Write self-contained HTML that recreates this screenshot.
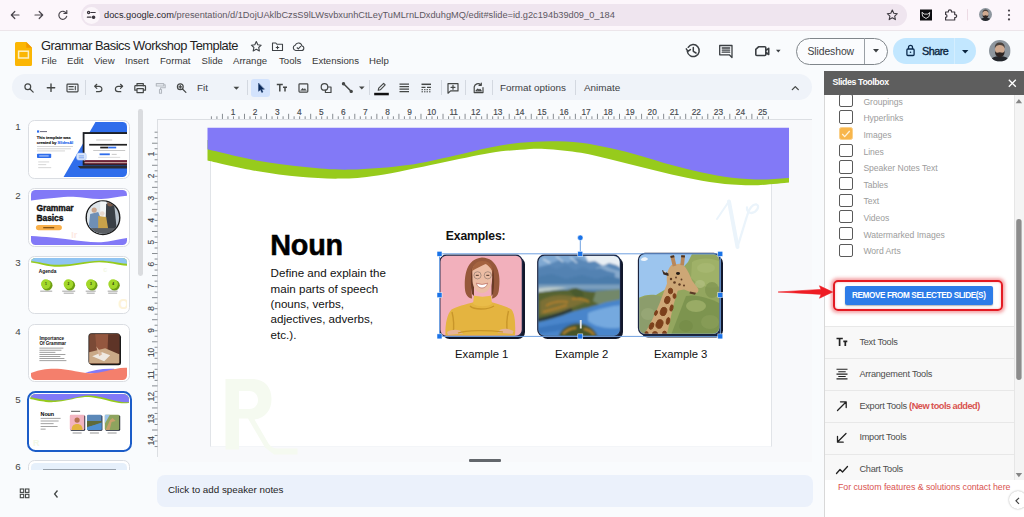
<!DOCTYPE html>
<html><head><meta charset="utf-8">
<style>
*{box-sizing:border-box;margin:0;padding:0}
html,body{width:1024px;height:517px;overflow:hidden;background:#f9fbfd;font-family:"Liberation Sans",sans-serif;color:#1f1f1f}
.abs,.t{position:absolute}
.t{white-space:nowrap;line-height:1}
svg{position:absolute;overflow:visible}
#chrome{left:0;top:0;width:1024px;height:31px;background:#fcf6fb;border-bottom:1px solid #ece5ea}
#url{left:81px;top:4px;width:826px;height:21.600px;border-radius:11px;background:#efe5ef}
#hdr{left:0;top:31px;width:1024px;height:42px;background:#f9fbfd}
.menu{top:56.4px;font-size:9.6px;color:#383838}
#tb{left:11.700px;top:74px;width:800.500px;height:26px;border-radius:13px;background:#eff3f9}
.tbt{top:83px;font-size:9.9px;color:#3c4043}
.sep{position:absolute;top:80px;width:1px;height:15px;background:#d3d8e0}
</style></head><body>
<!-- ===== browser chrome ===== -->
<div class="abs" id="chrome"></div>
<div class="abs" id="url"></div>
<div class="abs" style="left:83px;top:7px;width:17px;height:17px;border-radius:9px;background:#fbf6fa"></div>
<div class="t" id="u1" style="left:104px;top:11.4px;font-size:9.26px;color:#5d5862"><span style="color:#27242a">docs.google.com</span>/presentation/d/1DojUAklbCzsS9lLWsvbxunhCtLeyTuMLrnLDxduhgMQ/edit#slide=id.g2c194b39d09_0_184</div>
<svg width="1024" height="31" style="left:0;top:0" fill="none" stroke="#4a464d" stroke-width="1.2" stroke-linecap="round" stroke-linejoin="round">
 <path d="M19 15H11.5M14.8 11.5L11.3 15l3.5 3.5"/>
 <path d="M35 15h7.5M39.2 11.5l3.5 3.5-3.5 3.5"/>
 <path d="M66.3 13.2a4 4 0 1 0 .4 3.2M66.8 10.6v2.9h-2.9"/>
 <g stroke="#3a363d" stroke-width="1.200"><circle cx="88.600" cy="12.500" r="1.100" fill="none"/><path d="M90.800 12.500h4.400M87.400 17.200h3.600"/><circle cx="93.600" cy="17.200" r="1.200" fill="#3a363d"/></g>
 <path d="M892.3 10l1.5 3.3 3.5.4-2.6 2.4.7 3.5-3.1-1.8-3.1 1.8.7-3.5-2.6-2.4 3.5-.4z" stroke="#3d3940" stroke-width="1.1"/>
 <rect x="920" y="9.5" width="12" height="11" fill="#0c0c10" stroke="none"/>
 <path d="M922.3 12.5l2 1.6h3.4l2-1.6-.6 4-3.1 2-3.1-2z" stroke="#fff" stroke-width=".8"/>
 <path d="M945.600 12h2.700v-.6a1.600 1.600 0 0 1 3.200 0v.6h3.200v2.600h.5a1.500 1.500 0 0 1 0 3h-.5v2.400h-9.100v-2.700a1.400 1.400 0 0 0 0-2.800z" stroke="#3d3940" stroke-width="1.200"/>
 <path d="M967.500 9.500v10.500" stroke="#ecdbe4" stroke-width="1"/>
 <g fill="#4a464d" stroke="none"><circle cx="1009" cy="10.6" r="1.1"/><circle cx="1009" cy="15" r="1.1"/><circle cx="1009" cy="19.4" r="1.1"/></g>
</svg>
<svg width="13" height="13" viewBox="0 0 22 22" style="left:978.800px;top:8.100px"><clipPath id="avc2"><circle cx="11" cy="11" r="11"/></clipPath><g clip-path="url(#avc2)"><rect width="22" height="22" fill="#8d969e"/><path d="M1 22c1-4 4-5.500 10-5.500s9 1.500 10 5.500z" fill="#23262b"/><ellipse cx="11" cy="9.800" rx="4.900" ry="6.200" fill="#cfa98f"/><path d="M6 8.500c-.5-4 2-6 5-6s5.500 2 5 6c-1-2.500-2.500-3.500-5-3.500s-4 1-5 3.500z" fill="#4b423d"/><path d="M6.100 10.500c.4 2 1 2.500 2.400 2.500l2.500-.6 2.500.6c1.400 0 2-.5 2.400-2.500.3 4-1.300 7-4.900 7s-5.200-3-4.900-7z" fill="#2d2523"/></g></svg>

<!-- ===== slides header ===== -->
<div class="abs" id="hdr"></div>
<svg width="20" height="26" style="left:14.600px;top:41.700px"><path d="M1.500 0H11.300l5.700 5.700v16.800A1.500 1.500 0 0 1 15.500 24H1.500A1.500 1.500 0 0 1 0 22.500V1.500A1.500 1.500 0 0 1 1.500 0z" fill="#fbb604"/><path d="M11.300 0l5.700 5.700h-5.700z" fill="#f29900"/><rect x="3.600" y="9.200" width="9.800" height="6.800" fill="none" stroke="#fdf0c4" stroke-width="1.500"/></svg>
<div class="t" id="title" style="left:41px;top:40.2px;font-size:12.9px;letter-spacing:-.5px;color:#1f1f1f">Grammar Basics Workshop Template</div>
<svg width="70" height="14" style="left:248px;top:39px" fill="none" stroke="#3f4347" stroke-width="1.1" stroke-linejoin="round">
 <path d="M8.3 2.600l1.500 3.200 3.400.4-2.500 2.300.7 3.400-3.100-1.700-3.100 1.700.7-3.400-2.500-2.300 3.400-.4z"/>
 <path d="M24.500 4h3.300l1.200 1.300h5.500v6.200h-10zM29.500 6.800v3.400M27.800 8.500h3.400"/>
 <path d="M47.700 11.500h5.800a2.300 2.300 0 0 0 .4-4.570 3.500 3.500 0 0 0-6.700-.7A2.700 2.700 0 0 0 47.700 11.500zM48.800 8.500l1.500 1.400 2.600-2.700" />
</svg>
<div class="t menu" id="m1" style="left:41.500px">File</div>
<div class="t menu" id="m2" style="left:67px">Edit</div>
<div class="t menu" id="m3" style="left:94px">View</div>
<div class="t menu" id="m4" style="left:125px">Insert</div>
<div class="t menu" id="m5" style="left:160px">Format</div>
<div class="t menu" id="m6" style="left:201.500px">Slide</div>
<div class="t menu" id="m7" style="left:233px">Arrange</div>
<div class="t menu" id="m8" style="left:279px">Tools</div>
<div class="t menu" id="m9" style="left:312px">Extensions</div>
<div class="t menu" id="m10" style="left:369px">Help</div>

<!-- header right -->
<svg width="110" height="20" style="left:684px;top:41px" fill="none" stroke="#3b3f43" stroke-width="1.500" stroke-linecap="round" stroke-linejoin="round">
 <path d="M4.200 6.300A6 6 0 1 1 3.300 10.500M2.300 7.800l1.600 2.500 2.500-1.700M9.300 6.500V10.300l2.700 1.700"/>
 <path d="M35.700 4.500h12.300v9.300v2.700l-2.700-2.700H35.700zM38.200 7h7.500M38.200 9.100h7.500M38.200 11.200h7.500" stroke-width="1.300"/>
 <path d="M74.500 5.800h6.300a1 1 0 0 1 1 1v6.700a1 1 0 0 1-1 1h-8a1 1 0 0 1-1-1V8.300zM82 9.300l2.700-2v6.200L82 11.500" stroke-width="1.600"/>
 <path d="M92 8.800h4.600l-2.300 2.600z" fill="#3b3f43" stroke="none"/>
</svg>
<div class="abs" style="left:796px;top:37.500px;width:92px;height:27px;border-radius:14px;border:1px solid #80868b;background:#fbfcfe"></div>
<div class="abs" style="left:864px;top:38px;width:1px;height:26px;background:#9aa0a6"></div>
<div class="t" id="ss" style="left:807.500px;top:46.5px;font-size:10.4px;color:#3c4043;letter-spacing:-.1px">Slideshow</div>
<svg width="8" height="5" style="left:872.500px;top:49px"><path d="M0 0h6l-3 3.400z" fill="#3c4043"/></svg>
<div class="abs" style="left:893px;top:38px;width:83px;height:26px;border-radius:13px;background:#c2e7ff"></div>
<div class="abs" style="left:954px;top:38px;width:1px;height:26px;background:#d4eeff"></div>
<svg width="10" height="13" style="left:905.500px;top:44px" fill="none" stroke="#0a2a4d" stroke-width="1.300"><rect x=".9" y="5" width="7.200" height="6.500" rx="1"/><path d="M2.500 5V3.300a2 2 0 0 1 4 0V5"/><circle cx="4.500" cy="8.300" r=".8" fill="#0a2a4d" stroke="none"/></svg>
<div class="t" id="share" style="left:922px;top:46px;font-size:10.8px;color:#0a2540;-webkit-text-stroke:.35px #0a2540;letter-spacing:-.5px">Share</div>
<svg width="8" height="5" style="left:961.500px;top:49.500px"><path d="M0 0h6.400l-3.200 3.500z" fill="#0a2540"/></svg>
<svg width="21.600" height="21.600" viewBox="0 0 22 22" style="left:989.200px;top:40.400px"><clipPath id="avc"><circle cx="11" cy="11" r="11"/></clipPath><g clip-path="url(#avc)"><rect width="22" height="22" fill="#8d969e"/><path d="M1 22c1-4 4-5.500 10-5.500s9 1.500 10 5.500z" fill="#23262b"/><ellipse cx="11" cy="9.800" rx="4.900" ry="6.200" fill="#cfa98f"/><path d="M6 8.500c-.5-4 2-6 5-6s5.500 2 5 6c-1-2.500-2.500-3.500-5-3.500s-4 1-5 3.500z" fill="#4b423d"/><path d="M6.100 10.500c.4 2 1 2.500 2.400 2.500l2.500-.6 2.500.6c1.400 0 2-.5 2.400-2.500.3 4-1.300 7-4.900 7s-5.200-3-4.900-7z" fill="#2d2523"/></g></svg>

<!-- ===== toolbar ===== -->
<div class="abs" id="tb"></div>
<div class="abs" style="left:251.400px;top:78.500px;width:19px;height:18.700px;border-radius:3px;background:#d3e3fd"></div>
<div class="sep" style="left:85px"></div><div class="sep" style="left:246.500px"></div><div class="sep" style="left:368.500px"></div><div class="sep" style="left:440.500px"></div><div class="sep" style="left:465px"></div><div class="sep" style="left:491.500px"></div><div class="sep" style="left:575px"></div>
<svg width="812" height="30" style="left:0;top:74px" fill="none" stroke="#444746" stroke-width="1.200" stroke-linecap="round" stroke-linejoin="round">
 <circle cx="27.800" cy="12.800" r="2.900"/><path d="M30 15l3.200 3.200"/>
 <path d="M47.300 13.700h7.400M51 10v7.400" stroke-width="1.400"/>
 <rect x="67" y="10.200" width="11" height="7.600" rx=".8"/><path d="M69 12.600h4.300M69 15.300h4.300M75.300 12.300v3.400" stroke-width="1.100"/>
 <path d="M95 12.300h4.200a2.700 2.700 0 0 1 0 5.400H96.500M96.800 10.300L94.700 12.300l2.100 2.100"/>
 <path d="M122.300 12.300h-4.200a2.700 2.700 0 0 0 0 5.400h2.700M120.500 10.300l2.100 2l-2.100 2.100"/>
 <path d="M137 12V9.600h6.300V12M137 16.200h-2.200V12.400a.8.800 0 0 1 .8-.8h9.100a.8.800 0 0 1 .8.800v3.800h-2.200M137 14.600h6.300v4H137z"/>
 <g stroke="#b4b9c0"><path d="M156.300 9.600h7.400v2.400h-7.400zM163.700 10.800h1.500v3h-4.700v1.700M159.500 15.500h2v3.800h-2z" stroke-width="1.100"/></g>
 <circle cx="180.300" cy="12.800" r="2.900"/><path d="M182.500 15l3.400 3.400M178.900 12.800h2.800M180.300 11.400v2.800" stroke-width="1.200"/>
 <path d="M233.500 12.800h5.800l-2.900 3z" fill="#444746" stroke="none"/>
 <path d="M258.600 9.500v7.800l1.900-1.700 1.300 2.900 1.100-.5-1.300-2.800h2.500z" fill="#0b2a5c" stroke="#0b2a5c" stroke-width=".5"/>
 <path d="M276.800 10.400h6M279.800 10.400v7M283 13.200h4M285 13.200v4.200" stroke-width="1.500" stroke-linecap="butt"/>
 <rect x="299" y="9.800" width="8.800" height="8.300" rx=".8"/><path d="M300.800 16.200l1.800-2 1.300 1.300 1-1 1.300 1.700z" fill="#444746" stroke-width=".4"/>
 <circle cx="324.500" cy="12.900" r="3.300"/><path d="M328 13h3v5.500h-5.600v-2.300"/>
 <path d="M343.600 9.800l7.500 7.500" stroke-width="1.500"/><circle cx="343.500" cy="9.700" r="1.100" fill="#444746"/><circle cx="351.200" cy="17.400" r="1.100" fill="#444746"/>
 <path d="M359 12.500h5.600l-2.800 2.900z" fill="#444746" stroke="none"/>
 <path d="M378.200 16.300l.5-2.100 4.900-4.900 1.600 1.600-4.900 4.900z" stroke-width="1.100"/>
 <rect x="374.200" y="18.800" width="14.600" height="2.500" fill="#111" stroke="none"/>
 <path d="M399.500 10.200h9.500M399.500 12.700h9.500M399.500 15.200h9.500M399.500 17.600h9.500" stroke-width="1.300" stroke-linecap="butt"/>
 <path d="M421.500 10.300h9.500" stroke-width="1.500" stroke-linecap="butt"/><path d="M421.500 13.300h9.500" stroke-width="1.200" stroke-dasharray="4 1.500" stroke-linecap="butt"/><path d="M421.500 15.700h9.500M421.500 17.800h9.500" stroke-width="1" stroke-dasharray="1.500 1" stroke-linecap="butt"/>
 <path d="M448 9.700h10v7.200h-7.400L448 19.200zM453 11.300v4M451 13.300h4" stroke-width="1.200"/>
 <path d="M474.200 13v5.600h8.800v-5M474.200 12.800a4 4 0 0 1 6.500-2.200M481.300 9v2.300h-2.300M476 17l1.700-1.900 1.300 1.200 1-1 1.300 1.700z" stroke-width="1.200"/>
 <path d="M792.300 15.600l3-3 3 3" stroke-width="1.300"/>
</svg>
<div class="t tbt" id="fit" style="left:197px">Fit</div>
<div class="t tbt" id="fo" style="left:500px">Format options</div>
<div class="t tbt" id="an" style="left:584px">Animate</div>


<!-- ===== filmstrip ===== -->
<style>
.num{left:14px;width:8px;text-align:center;font-size:9.800px;color:#444}
.th{left:28.300px;width:101.600px;height:58.600px;border-radius:6.500px;background:#fff;border:1px solid #dadde2;overflow:hidden}
.th svg{left:1.500px;top:.900px;width:96.600px;height:54.800px;border-radius:4.500px;overflow:hidden}
</style>
<div class="abs" style="left:0;top:101px;width:147px;height:369px;background:#f9fbfd"></div>
<div class="abs" style="left:138.200px;top:108.800px;width:4.900px;height:167.500px;border-radius:2.400px;background:#dadcdf"></div>
<div class="t num" style="top:122px">1</div>
<div class="t num" style="top:190.500px">2</div>
<div class="t num" style="top:257.500px">3</div>
<div class="t num" style="top:326.500px">4</div>
<div class="t num" style="top:394.500px">5</div>
<div class="t num" style="top:461.800px">6</div>
<!-- thumb 1 -->
<div class="abs th" style="top:120px"><svg viewBox="30.800 121.900 96.600 54.800">
 <path d="M95.500 121.500H129v56H63z" fill="#2f6deb"/>
 <rect x="82.500" y="132" width="46" height="33.500" fill="#1e2024"/>
 <rect x="84.300" y="133.900" width="44" height="27" fill="#fff"/>
 <rect x="84.300" y="160" width="44" height="4.200" fill="#6d2338"/>
 <rect x="84.300" y="162" width="44" height="1" fill="#c9a9a0"/>
 <path d="M77.600 165.800h51v2.600H80z" fill="#2a2d33"/>
 <rect x="96" y="139.500" width="16" height=".8" fill="#bbb"/>
 <rect x="89" y="143.800" width="38" height="1.700" fill="#222"/><rect x="100" y="146.600" width="8" height="1.700" fill="#222"/><rect x="108" y="146.600" width="8" height="1.700" fill="#2f6deb"/>
 <rect x="93" y="150" width="32" height=".8" fill="#bbb"/>
 <rect x="99.400" y="153.300" width="10.200" height="1.800" fill="#2f6deb"/><rect x="111.500" y="153.800" width="5" height=".8" fill="#bbb"/>
 <rect x="98" y="156.800" width="22" height=".7" fill="#ccc"/>
 <rect x="76.400" y="153" width="9.600" height="7" rx="2" fill="#dbe7fb" stroke="#a9c5f7" stroke-width=".6"/><rect x="78.500" y="155.300" width="5.400" height="1" fill="#7fa6ee"/><rect x="78.500" y="157.200" width="5.400" height="1" fill="#7fa6ee"/>
 <rect x="36.800" y="130.300" width="2.200" height="2.200" fill="#2f6deb"/><rect x="39.800" y="130.900" width="7" height="1.100" fill="#778"/>
 <text x="36.600" y="139" font-family="Liberation Sans, sans-serif" font-weight="bold" font-size="3.950" fill="#1b1b1b" stroke="#1b1b1b" stroke-width=".15">This template was</text>
 <text x="36.600" y="144.400" font-family="Liberation Sans, sans-serif" font-weight="bold" font-size="3.950" fill="#1b1b1b" stroke="#1b1b1b" stroke-width=".15">created by <tspan fill="#2f6deb" stroke="#2f6deb">SlidesAI</tspan></text>
 <rect x="36.800" y="146.200" width="36" height=".7" fill="#c4c4c4"/><rect x="36.800" y="148.400" width="34" height=".7" fill="#c4c4c4"/><rect x="36.800" y="150.500" width="28" height=".7" fill="#c4c4c4"/>
 <rect x="36.800" y="153.700" width="14.200" height="4.200" rx=".8" fill="#2f6deb"/><rect x="39" y="155.400" width="9.500" height=".9" fill="#cfe0ff"/>
 <rect x="38" y="161.500" width="11" height=".7" fill="#c4c4c4"/><rect x="38" y="164.300" width="8" height=".7" fill="#c4c4c4"/><rect x="38" y="167.300" width="13" height=".7" fill="#c4c4c4"/>
</svg></div>
<!-- thumb 2 -->
<div class="abs th" style="top:188px"><svg viewBox="30.800 189.900 96.600 54.800">
 <path d="M29 189h100v6.500c-10 .5-18 3.200-28 3.500s-18-2.200-28-2.400-26 1.800-44 4z" fill="#8279f7"/>
 <path d="M29 246h100v-8.200c-8 .5-18 3.800-28 4.300s-22-1.500-32-2.800-26-3-40-3.600z" fill="#8279f7"/>
 <text x="36.300" y="211" font-family="Liberation Sans, sans-serif" font-weight="bold" font-size="8.500" fill="#111" stroke="#111" stroke-width=".35" letter-spacing="-.1">Grammar</text>
 <text x="36.300" y="220.500" font-family="Liberation Sans, sans-serif" font-weight="bold" font-size="8.500" fill="#111" stroke="#111" stroke-width=".35" letter-spacing="-.1">Basics</text>
 <rect x="35.700" y="224.800" width="26" height="5.400" rx="2.700" fill="#f9b04a"/><rect x="43" y="227" width="11" height="1.200" fill="#7a4a10"/>
 <circle cx="102.800" cy="217.600" r="16.800" fill="#b9c3cc" stroke="#1c1c1c" stroke-width="1.400"/>
 <clipPath id="cc"><circle cx="102.800" cy="217.600" r="16.100"/></clipPath>
 <g clip-path="url(#cc)"><rect x="86" y="200" width="16" height="36" fill="#dfe6ea"/><rect x="100" y="200" width="6" height="20" fill="#f3f6f7"/><path d="M106 204h8l3 30h-12z" fill="#3a4046"/><circle cx="110" cy="203.500" r="3" fill="#7a5a48"/><path d="M90 214l8-2 4 10-6 10H88z" fill="#6f8fb5"/><circle cx="94" cy="210" r="2.600" fill="#caa58c"/><path d="M98 216l8 1 2 12h-10z" fill="#c9a24a"/><circle cx="102" cy="213.500" r="2.400" fill="#e7d9cf"/><rect x="86" y="228" width="34" height="8" fill="#5a5e63"/></g>
 <text x="71" y="238" font-family="Liberation Sans, sans-serif" font-size="9" fill="#fde9e3" font-weight="bold">Ir</text>
</svg></div>
<!-- thumb 3 -->
<div class="abs th" style="top:255.800px"><svg viewBox="30.800 257.700 96.600 54.800">
 <path d="M29 257h100v8.500c-10 0-18-3.500-30-3.500s-26 4.500-40 4.500-20-4-30-4.500z" fill="#97cb1c"/>
 <path d="M29 257h100v6.500c-10 0-18-3-30-3s-26 4-40 4-20-3.500-30-4z" fill="#8fc4f2"/>
 <text x="38.600" y="272.600" font-family="Liberation Sans, sans-serif" font-weight="bold" font-size="4.800" fill="#111">Agenda</text>
 <g fill="#6e9f12"><circle cx="47" cy="285" r="5.300"/><circle cx="69.600" cy="285" r="5.300"/><circle cx="92" cy="285" r="5.300"/><circle cx="114.300" cy="285" r="5.300"/></g>
 <g fill="#a3d82a"><circle cx="45.600" cy="283.800" r="4.800"/><circle cx="68.200" cy="283.800" r="4.800"/><circle cx="90.600" cy="283.800" r="4.800"/><circle cx="112.900" cy="283.800" r="4.800"/></g>
 <g font-family="Liberation Sans, sans-serif" font-size="3.200" font-weight="bold" fill="#23330a" text-anchor="middle"><text x="45.600" y="285">1</text><text x="68.200" y="285">2</text><text x="90.600" y="285">3</text><text x="112.900" y="285">4</text></g><g fill="#999"><rect x="40" y="290.400" width="12" height=".9"/><rect x="62" y="290.400" width="13" height=".9"/><rect x="63.500" y="292.400" width="10" height=".9"/><rect x="85.500" y="290.400" width="10" height=".9"/><rect x="86.500" y="292.400" width="8" height=".9"/><rect x="107.500" y="290.400" width="10" height=".9"/><rect x="108" y="292.400" width="9" height=".9"/></g>
 <text x="103" y="272" font-family="Liberation Sans, sans-serif" font-size="7" fill="#f3f8e6" font-weight="bold">c</text>
 <text x="118" y="309" font-family="Liberation Sans, sans-serif" font-size="14" fill="#fdf3d9" font-weight="bold">O</text>
</svg></div>
<!-- thumb 4 -->
<div class="abs th" style="top:323.800px"><svg viewBox="30.800 325.700 96.600 54.800">
 <path d="M84 373c8-3 18-5 30-4.500l2 4z" fill="#8279f7"/>
 <path d="M29 382h100V367.600c-8-1-16 1.400-24 3.400s-16 2.500-24 1-20-4-30-3.500-15 2.500-22 4.900z" fill="#f47f6c"/>
 <rect x="89.800" y="334.500" width="31" height="30.500" rx="2.500" fill="#1a1a1a"/>
 <rect x="88.600" y="333.300" width="31" height="30.500" rx="2.500" fill="#7b4a36" stroke="#1a1a1a" stroke-width=".7"/>
 <path d="M95 334h18l-4 16-12 6z" fill="#94573f"/><path d="M108 334h11v22l-12 2z" fill="#5e3427"/><path d="M89 352l16-4 14 6v9H89z" fill="#caa987"/><path d="M92 356l10-4 8 3-6 6z" fill="#efe9e2"/><path d="M96 346l6 8-3 2z" fill="#d8b59a"/>
 <text x="39.200" y="339.600" font-family="Liberation Sans, sans-serif" font-weight="bold" font-size="4.600" fill="#111">Importance</text>
 <text x="39.200" y="344.900" font-family="Liberation Sans, sans-serif" font-weight="bold" font-size="4.600" fill="#111">Of Grammar</text>
 <g fill="#8a8a8a"><rect x="39.200" y="347.400" width="24" height=".8"/><rect x="39.200" y="349.500" width="22" height=".8"/><rect x="39.200" y="351.600" width="16" height=".8"/><rect x="39.200" y="353.700" width="26" height=".8"/><rect x="39.200" y="355.800" width="21" height=".8"/><rect x="39.200" y="357.900" width="25" height=".8"/><rect x="39.200" y="360" width="27" height=".8"/></g>
</svg></div>
<!-- thumb 5 (selected) -->
<div class="abs" style="left:27.300px;top:391px;width:104.500px;height:61px;border-radius:8.500px;border:2.300px solid #1b5cc8;background:#fff"></div>
<div class="abs" style="left:30.400px;top:394.400px;width:98.500px;height:55px;border-radius:5.500px;overflow:hidden;background:#fff"><svg width="98.500" height="55" viewBox="30.400 394.400 98.500 55">
 <path d="M30.0 399.4C32.7 399.9 41.2 401.8 46.2 402.3C51.2 402.7 54.3 402.7 59.8 402.0C65.4 401.3 74.7 398.9 79.6 398.1C84.5 397.3 85.7 397.2 89.2 397.4C92.8 397.6 97.1 398.5 100.8 399.2C104.5 400.0 107.9 401.1 111.5 401.9C115.0 402.6 118.6 403.4 122.1 403.6C125.5 403.9 130.4 403.3 132.1 403.3L132 393L30 393Z" fill="#97cb1c"/>
 <path d="M30.0 397.4C32.8 397.9 41.2 400.1 47.1 400.5C53.0 401.0 59.8 400.8 65.2 400.2C70.6 399.6 75.4 397.8 79.6 397.1C83.8 396.4 86.7 396.0 90.2 396.0C93.7 396.1 97.3 396.6 100.8 397.3C104.4 398.0 107.9 399.3 111.5 400.2C115.0 401.1 118.6 402.0 122.1 402.4C125.5 402.8 130.4 402.5 132.1 402.5L132 393L30 393Z" fill="#8279f7"/>
 <text x="41" y="416" font-family="Liberation Sans, sans-serif" font-weight="bold" font-size="5.400" fill="#000" letter-spacing="-.1">Noun</text>
 <g fill="#8c8c8c"><rect x="41" y="418.300" width="20" height=".8"/><rect x="41" y="421" width="18" height=".8"/><rect x="41" y="423.700" width="13" height=".8"/><rect x="41" y="426.400" width="17" height=".8"/><rect x="41" y="429.100" width="5" height=".8"/></g>
 <rect x="71.500" y="411.200" width="9" height="1" fill="#555"/>
 <rect x="70.800" y="415.800" width="14.800" height="15.300" rx="1.200" fill="#12182b"/><rect x="88" y="415.800" width="14.800" height="15.300" rx="1.200" fill="#12182b"/><rect x="105.800" y="415.800" width="14.800" height="15.300" rx="1.200" fill="#12182b"/>
 <rect x="70.200" y="415.200" width="14.600" height="15.100" rx="1.200" fill="#f2b4c0"/><path d="M72 430.300c0-4 2-6 5.500-6s5.500 2 5.500 6z" fill="#e3b33d"/><circle cx="77.500" cy="420.500" r="2.600" fill="#b5714e"/>
 <rect x="87.400" y="415.200" width="14.600" height="15.100" rx="1.200" fill="#5b88b8"/><path d="M87.400 421.500h14.600v2.500l-14.600 3.500z" fill="#5f6a3a"/><path d="M87.400 428l14.600-5v7.300H87.400z" fill="#4f8fd0"/>
 <rect x="105.200" y="415.200" width="14.600" height="15.100" rx="1.200" fill="#8ea45e"/><path d="M105.200 415.200h5l-5 9z" fill="#9cc3ea"/><path d="M106 430.300l4.500-10 2.500-2 3 3-4 1-2 8z" fill="#c9a06c"/>
 <g fill="#7a7a7a"><rect x="73" y="433" width="9" height=".8"/><rect x="90.300" y="433" width="9" height=".8"/><rect x="108" y="433" width="9" height=".8"/></g>
 <text x="33.500" y="446" font-family="Liberation Sans, sans-serif" font-size="9" fill="#f3f8e6" font-weight="bold">R</text>
</svg></div>
<!-- thumb 6 -->
<div class="abs" style="left:28.300px;top:460px;width:101.600px;height:20px;border-radius:6.500px;background:#fff;border:1px solid #dadde2"></div>
<div class="abs" style="left:30.800px;top:462.600px;width:96.600px;height:20px;border-radius:4.500px;background:#e6f0fb"></div>
<div class="abs" style="left:42.500px;top:468.900px;width:73px;height:1.100px;background:#98a2ad"></div>
<!-- bottom bar -->
<div class="abs" style="left:0;top:470px;width:150px;height:47px;background:#f9fbfd"></div>
<svg width="50" height="14" style="left:19px;top:486.600px" fill="none" stroke="#444746" stroke-width="1.100"><rect x="1.300" y="2" width="3.400" height="3.400"/><rect x="6.500" y="2" width="3.400" height="3.400"/><rect x="1.300" y="7.300" width="3.400" height="3.400"/><rect x="6.500" y="7.300" width="3.400" height="3.400"/><path d="M38.500 3.500L35.600 7l2.900 3.500" stroke-width="1.300"/></svg>
<!-- ===== workspace ===== -->
<div class="abs" style="left:158px;top:120px;width:654px;height:342px;background:#f8f9fb"></div>
<div class="abs" style="left:209.800px;top:131.500px;width:562px;height:315.300px;background:#fff;border:1px solid #e1e4e8;border-bottom-color:#f3f5f8;border-top-color:#f3f5f8"></div>
<svg width="1024" height="517" style="left:0;top:0">
<path d="M157.500 119.500H812" stroke="#dcdfe3" stroke-width="1" fill="none"/>
<path d="M157.500 119V457" stroke="#dcdfe3" stroke-width="1" fill="none"/>
<path d="M211.40 116.3V119M216.91 116.3V119M222.43 113.8V119M227.94 116.3V119M233.46 116.3V119M238.97 116.3V119M244.49 113.8V119M250.00 116.3V119M255.52 116.3V119M261.04 116.3V119M266.55 113.8V119M272.06 116.3V119M277.58 116.3V119M283.10 116.3V119M288.61 113.8V119M294.12 116.3V119M299.64 116.3V119M305.15 116.3V119M310.67 113.8V119M316.19 116.3V119M321.70 116.3V119M327.22 116.3V119M332.73 113.8V119M338.25 116.3V119M343.76 116.3V119M349.27 116.3V119M354.79 113.8V119M360.31 116.3V119M365.82 116.3V119M371.34 116.3V119M376.85 113.8V119M382.37 116.3V119M387.88 116.3V119M393.39 116.3V119M398.91 113.8V119M404.42 116.3V119M409.94 116.3V119M415.45 116.3V119M420.97 113.8V119M426.49 116.3V119M432.00 116.3V119M437.51 116.3V119M443.03 113.8V119M448.54 116.3V119M454.06 116.3V119M459.57 116.3V119M465.09 113.8V119M470.61 116.3V119M476.12 116.3V119M481.63 116.3V119M487.15 113.8V119M492.66 116.3V119M498.18 116.3V119M503.69 116.3V119M509.21 113.8V119M514.73 116.3V119M520.24 116.3V119M525.75 116.3V119M531.27 113.8V119M536.78 116.3V119M542.30 116.3V119M547.81 116.3V119M553.33 113.8V119M558.85 116.3V119M564.36 116.3V119M569.88 116.3V119M575.39 113.8V119M580.90 116.3V119M586.42 116.3V119M591.93 116.3V119M597.45 113.8V119M602.97 116.3V119M608.48 116.3V119M614.00 116.3V119M619.51 113.8V119M625.02 116.3V119M630.54 116.3V119M636.05 116.3V119M641.57 113.8V119M647.09 116.3V119M652.60 116.3V119M658.12 116.3V119M663.63 113.8V119M669.14 116.3V119M674.66 116.3V119M680.17 116.3V119M685.69 113.8V119M691.20 116.3V119M696.72 116.3V119M702.24 116.3V119M707.75 113.8V119M713.26 116.3V119M718.78 116.3V119M724.29 116.3V119M729.81 113.8V119M735.32 116.3V119M740.84 116.3V119M746.35 116.3V119M751.87 113.8V119M757.38 116.3V119M762.90 116.3V119M768.41 116.3V119M154.6 132.20H157.5M154.6 137.71H157.5M152 143.23H157.5M154.6 148.74H157.5M154.6 154.26H157.5M154.6 159.77H157.5M152 165.29H157.5M154.6 170.80H157.5M154.6 176.32H157.5M154.6 181.83H157.5M152 187.35H157.5M154.6 192.86H157.5M154.6 198.38H157.5M154.6 203.89H157.5M152 209.41H157.5M154.6 214.92H157.5M154.6 220.44H157.5M154.6 225.95H157.5M152 231.47H157.5M154.6 236.98H157.5M154.6 242.50H157.5M154.6 248.01H157.5M152 253.53H157.5M154.6 259.04H157.5M154.6 264.56H157.5M154.6 270.07H157.5M152 275.59H157.5M154.6 281.11H157.5M154.6 286.62H157.5M154.6 292.13H157.5M152 297.65H157.5M154.6 303.16H157.5M154.6 308.68H157.5M154.6 314.19H157.5M152 319.71H157.5M154.6 325.22H157.5M154.6 330.74H157.5M154.6 336.25H157.5M152 341.77H157.5M154.6 347.28H157.5M154.6 352.80H157.5M154.6 358.31H157.5M152 363.83H157.5M154.6 369.34H157.5M154.6 374.86H157.5M154.6 380.38H157.5M152 385.89H157.5M154.6 391.40H157.5M154.6 396.92H157.5M154.6 402.43H157.5M152 407.95H157.5M154.6 413.46H157.5M154.6 418.98H157.5M154.6 424.49H157.5M152 430.01H157.5M154.6 435.52H157.5M154.6 441.04H157.5M154.6 446.55H157.5" stroke="#7b8086" stroke-width=".9" fill="none"/>
<g font-family="Liberation Sans, sans-serif" font-size="8.300" fill="#44484d" stroke="#44484d" stroke-width=".15"><text x="233.1" y="115" text-anchor="middle">1</text><text x="255.1" y="115" text-anchor="middle">2</text><text x="277.2" y="115" text-anchor="middle">3</text><text x="299.2" y="115" text-anchor="middle">4</text><text x="321.3" y="115" text-anchor="middle">5</text><text x="343.4" y="115" text-anchor="middle">6</text><text x="365.4" y="115" text-anchor="middle">7</text><text x="387.5" y="115" text-anchor="middle">8</text><text x="409.5" y="115" text-anchor="middle">9</text><text x="431.6" y="115" text-anchor="middle">10</text><text x="453.7" y="115" text-anchor="middle">11</text><text x="475.7" y="115" text-anchor="middle">12</text><text x="497.8" y="115" text-anchor="middle">13</text><text x="519.8" y="115" text-anchor="middle">14</text><text x="541.9" y="115" text-anchor="middle">15</text><text x="564.0" y="115" text-anchor="middle">16</text><text x="586.0" y="115" text-anchor="middle">17</text><text x="608.1" y="115" text-anchor="middle">18</text><text x="630.1" y="115" text-anchor="middle">19</text><text x="652.2" y="115" text-anchor="middle">20</text><text x="674.3" y="115" text-anchor="middle">21</text><text x="696.3" y="115" text-anchor="middle">22</text><text x="718.4" y="115" text-anchor="middle">23</text><text x="740.4" y="115" text-anchor="middle">24</text><text x="762.5" y="115" text-anchor="middle">25</text><text transform="translate(153.800 154.0) rotate(-90)" text-anchor="middle">1</text><text transform="translate(153.800 176.0) rotate(-90)" text-anchor="middle">2</text><text transform="translate(153.800 198.1) rotate(-90)" text-anchor="middle">3</text><text transform="translate(153.800 220.1) rotate(-90)" text-anchor="middle">4</text><text transform="translate(153.800 242.2) rotate(-90)" text-anchor="middle">5</text><text transform="translate(153.800 264.3) rotate(-90)" text-anchor="middle">6</text><text transform="translate(153.800 286.3) rotate(-90)" text-anchor="middle">7</text><text transform="translate(153.800 308.4) rotate(-90)" text-anchor="middle">8</text><text transform="translate(153.800 330.4) rotate(-90)" text-anchor="middle">9</text><text transform="translate(153.800 352.5) rotate(-90)" text-anchor="middle">10</text><text transform="translate(153.800 374.6) rotate(-90)" text-anchor="middle">11</text><text transform="translate(153.800 396.6) rotate(-90)" text-anchor="middle">12</text><text transform="translate(153.800 418.7) rotate(-90)" text-anchor="middle">13</text><text transform="translate(153.800 440.7) rotate(-90)" text-anchor="middle">14</text></g>
</svg>
<svg width="1024" height="517" style="left:0;top:0">
<path d="M207.5 160.4C215.7 162.2 241.1 168.3 256.5 171.0C271.9 173.7 286.1 175.5 300.0 176.8C313.9 178.1 327.1 178.8 340.0 178.6C352.9 178.4 361.3 178.0 377.6 175.5C393.9 173.0 419.3 167.2 438.0 163.4C456.7 159.7 476.3 155.3 490.0 153.0C503.7 150.7 510.8 150.5 520.0 149.8C529.2 149.1 534.8 148.4 545.0 148.9C555.2 149.4 570.0 151.0 581.0 152.8C592.0 154.6 601.0 157.1 611.0 159.5C621.0 161.9 630.9 164.5 641.0 167.0C651.1 169.5 661.4 172.3 671.6 174.6C681.8 176.9 691.9 179.0 702.0 180.7C712.1 182.4 722.7 183.8 732.0 184.6C741.3 185.3 748.5 185.5 758.0 185.2C767.5 184.8 783.8 182.9 789.0 182.5L789 140L207.5 140Z" fill="#97cb1c"/><path d="M207.5 149.2C215.7 151.1 240.2 157.4 256.5 160.4C272.8 163.4 289.4 165.5 305.0 167.0C320.6 168.5 332.8 169.9 350.0 169.6C367.2 169.3 390.8 167.3 408.0 165.0C425.2 162.7 439.3 158.8 453.0 155.9C466.7 153.0 478.8 149.6 490.0 147.4C501.2 145.2 509.9 143.8 520.0 142.8C530.1 141.8 540.3 141.3 550.5 141.3C560.7 141.3 570.9 141.6 581.0 142.8C591.1 144.0 601.0 146.1 611.0 148.3C621.0 150.5 630.9 153.1 641.0 155.9C651.1 158.7 661.4 162.2 671.6 165.0C681.8 167.8 691.9 170.4 702.0 172.5C712.1 174.6 721.9 176.5 732.0 177.7C742.1 178.9 753.0 179.4 762.5 179.5C772.0 179.6 784.6 178.2 789.0 178.0L789 127.7L207.5 127.7Z" fill="#8279f7"/>
</svg>

<!-- ===== slide content ===== -->
<div class="t" id="noun" style="left:270.300px;top:231.300px;font-size:28.800px;font-weight:bold;color:#000;letter-spacing:-.25px;-webkit-text-stroke:.5px #000">Noun</div>
<div class="t" id="b1" style="left:270.600px;top:267px;font-size:11.600px;color:#111">Define and explain the</div>
<div class="t" id="b2" style="left:270.600px;top:282.600px;font-size:11.600px;color:#111">main parts of speech</div>
<div class="t" id="b3" style="left:270.600px;top:297.900px;font-size:11.600px;color:#111">(nouns, verbs,</div>
<div class="t" id="b4" style="left:270.600px;top:313.200px;font-size:11.600px;color:#111">adjectives, adverbs,</div>
<div class="t" id="b5" style="left:270.600px;top:328.500px;font-size:11.600px;color:#111">etc.).</div>
<div class="t" id="ex" style="left:445.800px;top:229.600px;font-size:12.200px;font-weight:bold;color:#111;letter-spacing:-.15px">Examples:</div>
<div class="t" id="e1" style="left:455px;top:348.500px;font-size:11.300px;color:#111">Example 1</div>
<div class="t" id="e2" style="left:555px;top:348.500px;font-size:11.300px;color:#111">Example 2</div>
<div class="t" id="e3" style="left:654px;top:348.500px;font-size:11.300px;color:#111">Example 3</div>
<!-- watermarks -->
<svg width="60" height="60" style="left:710px;top:195px" fill="none" stroke="#ebf4fb" stroke-linecap="round" stroke-linejoin="round"><path d="M7 24L18.500 7" stroke-width="2"/><path d="M19 6.500L27.500 52" stroke-width="4"/><path d="M27.500 52L37 21C39 13 43 9 46.500 9.500C50 10.500 47.500 17 41.500 18C38.500 18 36.500 15.500 37 12.500" stroke-width="2.300"/></svg>
<svg width="90" height="90" style="left:220px;top:370px"><path d="M5.500 9h26c13 0 20 8 20 20 0 11-6 19-17 20.500l14 24c2 3 5 5 9 5h20v6H54l-9-7-17-29H19v31H5.500z M19 21v18h10c6 0 9-4 9-9s-3-9-9-9z" fill="#f5faf0" fill-rule="evenodd"/></svg>

<!-- photos -->
<svg width="1024" height="517" style="left:0;top:0">
<defs>
 <clipPath id="c1"><rect x="440.600" y="256" width="81" height="79.500" rx="6"/></clipPath>
 <clipPath id="c2"><rect x="538.600" y="256" width="81" height="79.500" rx="6"/></clipPath>
 <clipPath id="c3"><rect x="639.200" y="254.300" width="80" height="79.500" rx="6"/></clipPath>
 <filter id="bl" x="-5%" y="-5%" width="110%" height="110%"><feGaussianBlur stdDeviation=".55"/></filter><filter id="bl2" x="-5%" y="-5%" width="110%" height="110%"><feGaussianBlur stdDeviation=".9"/></filter>
 <linearGradient id="sky2" x1="0" y1="0" x2="0" y2="1"><stop offset="0" stop-color="#7fa3c4"/><stop offset=".55" stop-color="#6f93b8"/><stop offset="1" stop-color="#9db4c4"/></linearGradient>
 <linearGradient id="lake" x1="0" y1="0" x2="1" y2="1"><stop offset="0" stop-color="#7fb0e0"/><stop offset=".5" stop-color="#4f8fd0"/><stop offset="1" stop-color="#2f6cb5"/></linearGradient>
 <linearGradient id="sky3" x1="0" y1="0" x2="0" y2="1"><stop offset="0" stop-color="#8dbcec"/><stop offset="1" stop-color="#b5d0e8"/></linearGradient>
</defs>
<!-- shadows -->
<rect x="442.500" y="257.500" width="82.500" height="81.500" rx="7" fill="#12182b"/>
<rect x="540.500" y="257.500" width="82.500" height="81.500" rx="7" fill="#12182b"/>
<rect x="641" y="256" width="82" height="81.500" rx="7" fill="#12182b"/>
<!-- photo 1 -->
<rect x="439.800" y="255.200" width="82.600" height="81.100" rx="6.500" fill="#f2b0bc" stroke="#1a2340" stroke-width="1.300"/>
<g clip-path="url(#c1)" filter="url(#bl)">
 <path d="M445.500 336.500c-.5-10 1-22 6-27 5-3 14-5 22.500-7.500h17c8.500 2.500 15 4 20.500 7.500 4 5 4 17 3.500 27z" fill="#e4b440"/>
 <path d="M474 295.500c5 1.500 12 1.500 17 0l1 8.500c-6 3-13 3-19 0z" fill="#e9bc4a"/>
 <path d="M452 312c2 8 2 16 1 22M508.500 311c-2 8-2 16-1 22M470 306c4 4 18 4 24 0" stroke="#c8962a" stroke-width="1.400" fill="none"/>
 <path d="M465.200 291c-1.500-16 1.300-32 16.800-33.500 15.500 .5 19.500 17 16.800 33-.5 4-2.500 7.500-6.800 8 1-6 1.500-14 .5-22l-5-8-14 2c-2 8-2.500 18-1.500 28-4-.5-6-3.500-6.800-7.500z" fill="#96583a"/>
 <path d="M472 268c-1.500 8-1.500 18 0 26l2 2v-10zM493 268c1.500 8 1.500 18 0 26l-1.500 2v-10z" fill="#6a3a26"/>
 <path d="M472.300 272c0-6 4-10 10-10 5.500 0 9.500 4 9.700 10l-.5 9c-.5 7-4 12-9.500 12s-9-5-9.500-12z" fill="#ecbda4"/>
 <path d="M472 271c1-7 5-10 10.500-10 6 0 9.500 3 10 10-3-4-5-6.500-7-7-4 2-9 4-13.500 7z" fill="#a4633f"/>
 <path d="M476.300 283.200q5.700 2.500 11.400 0q-1.500 4.800-5.700 4.800t-5.700-4.800z" fill="#fff" stroke="#b86a5e" stroke-width=".7"/>
 <circle cx="477.500" cy="275.300" r="3.600" fill="none" stroke="#8f7a70" stroke-width=".7"/><circle cx="487.800" cy="275.300" r="3.600" fill="none" stroke="#8f7a70" stroke-width=".7"/>
 <path d="M475.800 275.300h3M486.300 275.300h3" stroke="#4a3328" stroke-width="1"/>
 <path d="M447 332c4-2.500 9-3 13-1.500l3 3-15 1.500zM513.500 331c-4-2.500-9-3-13-1.500l-3 3 15 1.500z" fill="#e5b398"/>
 <path d="M458 333c8-3 30-3 45-1" stroke="#c8962a" stroke-width="1.200" fill="none"/>
</g>
<!-- photo 2 -->
<rect x="537.800" y="255.200" width="82.600" height="81.100" rx="6.500" fill="#5f8ab3" stroke="#1a2340" stroke-width="1.300"/>
<g clip-path="url(#c2)" filter="url(#bl2)">
 <rect x="536" y="253" width="87" height="36" fill="#5a88b8"/>
 <path d="M536 253h87v14l-6-2-7-5-8 3-8-5-9 3-8-3-9 5-9-3-9 4-12 3z" fill="#7fa8d2"/>
 <path d="M584 253h39v16l-7-4-7-2-6 3-8-5-7 1z" fill="#e9eff4"/>
 <path d="M543 259l7 4M556 256l7 6M570 257l7 6" stroke="#bdd2e6" stroke-width="1.600"/>
 <path d="M596 268l8-3 8 4 11 3v8h-30z" fill="#86a9cc"/>
 <path d="M536 270l12-4 9 3 9-4 9 5 8-3 8 3 9-2 7 3 8 2v16h-87z" fill="#5282b2"/>
 <path d="M536 277l16-3 14 5 16-4 14 4 12-3 15 3v12h-87z" fill="#4c7cab"/>
 <rect x="536" y="284.500" width="87" height="5" fill="#7b9fbd"/>
 <path d="M536 288.500c10-1.500 24-1.500 32-.5l-32 5z" fill="#bccaca"/>
 <path d="M536 293c10-2 24-3 32-3 4-2 8-2.500 11-.5 6 1 12 3 18 2l26-2v13l-22 7-30 10-35 5z" fill="#566430"/>
 <path d="M596 291l27-2v13l-20 5-10-6z" fill="#73886b"/>
 <path d="M540 301c8-5 20-7 30-5 8 1 12 3 16 6l-20 8c-10 3-16 4-26 5z" fill="#7c7034"/>
 <path d="M546 306c6-4 14-5 22-4M572 299c6-1 12 0 17 3M543 312c8-2 16-4 24-7" stroke="#ad7f2e" stroke-width="2" fill="none"/>
 <path d="M570 291l6-3 6 2 2 6-8 2z" fill="#4a5a2e"/>
 <path d="M536 322.500c12-2.500 24-6 34-10 7-2 12-3.500 17-4.500 8-2.500 14-4 18-5.500l18-3.500v38h-87z" fill="#4885cb"/>
 <path d="M588 313c10-4 22-7 35-8v22c-14 3-28 0-35-6z" fill="#74a9df"/>
 <path d="M536 328c12-2 30-6 44-7l-10 8-34 5z" fill="#3b76bc"/>
 <path d="M536 320.500c12-2 24-6 36-11" stroke="#27383a" stroke-width="3.200" fill="none"/>
 <path d="M558.500 338c1-8 8-13.500 19-14.500 9 0 18 4.500 20.500 14.500z" fill="#46552a"/>
 <path d="M563 334c4-4 9-6 13-6M584 329c5 1 8 3 10 6" stroke="#b9852e" stroke-width="2" fill="none"/>
</g>
<rect x="579.800" y="320" width="1.900" height="8.500" fill="#f3f1ea" opacity=".9"/>
<!-- photo 3 -->
<rect x="638.500" y="253.500" width="81.600" height="81.100" rx="6.500" fill="#9cc5ee" stroke="#1a2340" stroke-width="1.300"/>
<g clip-path="url(#c3)" filter="url(#bl)">
 <rect x="638" y="253" width="83" height="83" fill="#9cc5ee"/>
 <path d="M638 298c6-3 12-4 18-3l10-6 10-14 12-13 4-8c10-1.500 20-1 29 1v81h-83z" fill="#93a65e"/>
 <path d="M692 262c10-5 20-4 29 0v24c-12 4-22 0-30-8z" fill="#9fb168"/>
 <path d="M686 296c10-2 24 2 35 8v31h-50z" fill="#7d9450"/>
 <path d="M638 300c8-5 16-6 24-3l-6 38h-18z" fill="#8c9d6c"/>
 <g opacity=".75"><ellipse cx="706" cy="268" rx="9" ry="5" fill="#a9b972"/><ellipse cx="712" cy="290" rx="7" ry="8" fill="#7f9450"/><ellipse cx="696" cy="306" rx="10" ry="6" fill="#a3b36c"/><ellipse cx="710" cy="322" rx="9" ry="7" fill="#8a9e58"/><ellipse cx="686" cy="326" rx="7" ry="6" fill="#758c49"/><ellipse cx="648" cy="314" rx="7" ry="6" fill="#9aaa78"/><ellipse cx="700" cy="284" rx="5" ry="4" fill="#b2bf80"/></g>
 <path d="M642 258c2-1.500 5-1 6 1-2 2.500-5 2.500-7.500 1z" fill="#eef4fa"/>
 <path d="M643.500 335.500c6-10 12-22 16-32l7.500-20 12 3-6 20c-2 10-4 20-6.500 29z" fill="#cfa877"/>
 <path d="M667.500 287c-1.500-9-1-17 4-22l9.500-1.500c5 3 8 9 11 17l6 8c1.500 3-1 5.500-5 4.500l-9-3.500-8 1.500z" fill="#cda776"/>
 <path d="M672.700 266.500l-2.400-10.500 3.700-.8 2.400 10.300zM680.300 265l1-9.800 3.700.4-1 9.800z" fill="#b8875a"/>
 <path d="M670.300 256l3.700-.8.500 2-3.700.8zM681.300 255.200l3.700.4-.2 2-3.700-.4z" fill="#4a3222"/>
 <path d="M668.500 273.500l-6.500-3.500 1.500 4.500 5 1.500z" fill="#3a2a20"/><path d="M663 271l3 .5-.5 1.500z" fill="#eee"/>
 <ellipse cx="678" cy="273.500" rx="2" ry="1.400" fill="#231a14"/>
 <path d="M690 291.500l6 1.300-1 2-5.500-1.300z" fill="#5a3a28"/>
 <g fill="#5e3a22"><circle cx="671" cy="279" r="1.200"/><circle cx="674.500" cy="282.500" r="1.300"/><circle cx="679.500" cy="284.500" r="1.200"/><circle cx="684" cy="285.500" r="1"/><circle cx="676" cy="277.500" r=".9"/><circle cx="681.500" cy="279.500" r=".9"/></g>
 <g fill="#7b401c" stroke="#7b401c" stroke-width=".9"><ellipse cx="670.500" cy="291" rx="2.200" ry="2.800"/><ellipse cx="667.300" cy="300" rx="2.700" ry="3.800" transform="rotate(15 667.300 300)"/><ellipse cx="663.500" cy="311.500" rx="3.100" ry="4.300" transform="rotate(18 663.500 311.500)"/><ellipse cx="659.500" cy="324" rx="3.300" ry="4.500" transform="rotate(20 659.500 324)"/><ellipse cx="674.500" cy="296" rx="1.500" ry="2.600"/><ellipse cx="671.500" cy="308" rx="1.500" ry="3.200" transform="rotate(12 671.500 308)"/><ellipse cx="668" cy="321" rx="1.700" ry="3.500" transform="rotate(12 668 321)"/><ellipse cx="656" cy="313" rx="1.300" ry="2.600" transform="rotate(20 656 313)"/><ellipse cx="651.500" cy="326" rx="2" ry="3.300" transform="rotate(24 651.500 326)"/><ellipse cx="655" cy="334" rx="2.600" ry="2.400"/><ellipse cx="664.500" cy="333.500" rx="2" ry="2.400"/><ellipse cx="646.500" cy="333.500" rx="1.600" ry="2"/></g>
</g>
<!-- selection -->
<g fill="none" stroke="#6fa0e0" stroke-width="1"><path d="M439.500 253.800H720.300V336.400H439.500Z"/><path d="M580.300 253.800V238"/></g>
<g fill="#1a73e8" stroke="#fff" stroke-width=".5">
 <rect x="437" y="251.300" width="5" height="5"/><rect x="437" y="292.600" width="5" height="5"/><rect x="437" y="333.900" width="5" height="5"/>
 <rect x="577.800" y="251.300" width="5" height="5"/><rect x="577.800" y="333.900" width="5" height="5"/>
 <rect x="717.800" y="251.300" width="5" height="5"/><rect x="717.800" y="292.600" width="5" height="5"/><rect x="717.800" y="333.900" width="5" height="5"/>
 <circle cx="580.300" cy="237.800" r="2.700"/>
</g>
</svg>
<!-- notes -->
<div class="abs" style="left:469px;top:459.300px;width:31.500px;height:2.300px;background:#63676c;border-radius:1px"></div>
<div class="abs" style="left:157px;top:475.200px;width:655.500px;height:31.800px;border-radius:8px;background:#ebf1fb"></div>
<div class="t" id="notes" style="left:168px;top:484.700px;font-size:9.800px;color:#1f1f1f">Click to add speaker notes</div>

<!-- ===== right panel ===== -->
<style>
.cb{left:839.300px;width:13.500px;height:13.300px;border:1.200px solid #5a5a5a;border-radius:2px;background:#fff}
.cl{left:863.400px;font-size:8.600px;color:#9c9c9c;letter-spacing:-.03px}
.row{left:824.500px;width:189px;height:32px;background:#f8f8f8;border-top:1px solid #e8e8e8}
.rt{left:859.400px;font-size:9.2px;color:#4d4d4d;letter-spacing:-.25px}
.rt b{color:#d9534f;letter-spacing:-.5px}
</style>
<div class="abs" style="left:823.500px;top:72px;width:200.500px;height:445px;background:#fff;border-left:1px solid #d8d8d8"></div>
<div class="abs" style="left:1013.500px;top:94px;width:10.500px;height:388px;background:#f4f4f4;border-left:1px solid #e6e6e6"></div>
<div class="abs cb" style="top:93.8px"></div><div class="t cl" id="cl0" style="top:97.6px">Groupings</div><div class="abs cb" style="top:110.4px"></div><div class="t cl" id="cl1" style="top:114.2px">Hyperlinks</div><div class="abs" style="left:839.300px;top:127.1px;width:13.500px;height:13.300px;border-radius:2.500px;background:#f8b64c;border:1px solid #fad08a"></div><svg width="14" height="14" style="left:839.300px;top:127.1px"><path d="M3.200 7l2.500 2.600 5-5.600" fill="none" stroke="#fff3dc" stroke-width="1.300"/></svg><div class="t cl" id="cl2" style="top:130.9px">Images</div><div class="abs cb" style="top:143.7px"></div><div class="t cl" id="cl3" style="top:147.5px">Lines</div><div class="abs cb" style="top:160.3px"></div><div class="t cl" id="cl4" style="top:164.1px">Speaker Notes Text</div><div class="abs cb" style="top:176.9px"></div><div class="t cl" id="cl5" style="top:180.7px">Tables</div><div class="abs cb" style="top:193.6px"></div><div class="t cl" id="cl6" style="top:197.4px">Text</div><div class="abs cb" style="top:210.2px"></div><div class="t cl" id="cl7" style="top:214.0px">Videos</div><div class="abs cb" style="top:226.8px"></div><div class="t cl" id="cl8" style="top:230.6px">Watermarked Images</div><div class="abs cb" style="top:243.5px"></div><div class="t cl" id="cl9" style="top:247.3px">Word Arts</div>
<div class="abs" style="left:823.500px;top:71px;width:200.500px;height:23.500px;background:#5e5e5e"></div>
<div class="t" id="ph" style="left:832.500px;top:78.300px;font-size:8.800px;font-weight:bold;color:#fff;letter-spacing:-.4px">Slides Toolbox</div>
<svg width="10" height="10" style="left:1008px;top:78.500px"><path d="M.8.800l7 7M7.800.800l-7 7" stroke="#fff" stroke-width="1.300" fill="none"/></svg>
<div class="abs row" style="top:326.4px"></div><div class="t rt" id="rt0" style="top:337.8px">Text Tools</div><div class="abs row" style="top:358.2px"></div><div class="t rt" id="rt1" style="top:369.6px">Arrangement Tools</div><div class="abs row" style="top:390.1px"></div><div class="t rt" id="rt2" style="top:401.5px">Export Tools <b>(New tools added)</b></div><div class="abs row" style="top:422.0px"></div><div class="t rt" id="rt3" style="top:433.4px">Import Tools</div><div class="abs row" style="top:453.9px"></div><div class="t rt" id="rt4" style="top:465.3px">Chart Tools</div>
<div class="abs" style="left:824.500px;top:480px;width:199.500px;height:37px;background:#fff"></div>
<div class="t" id="foot" style="left:838px;top:482.500px;font-size:8.800px;color:#d9534f;letter-spacing:-.05px">For custom features &amp; solutions contact here</div>
<svg width="1024" height="517" style="left:0;top:0" fill="none" stroke="#222" stroke-width="1.300" stroke-linecap="round" stroke-linejoin="round">
 <path d="M836.500 338.500h6.300M839.600 338.500v7.600M843.300 341.300h4M845.300 341.300v4.800" stroke-width="1.700" stroke-linecap="butt"/>
 <path d="M836.500 369.300h11M838.300 371.700h7.400M836.500 374.100h11M838.300 376.500h7.400M836.500 378.900h11" stroke-width="1.100" stroke-linecap="butt"/>
 <path d="M837.500 410.500l8.500-8.500M840.500 401.800h5.700v5.700"/>
 <path d="M846 433.500l-8.500 8.500M843.200 442.200h-5.700v-5.700"/>
 <path d="M836.500 473.500l3.500-4 2.500 2.500 5-5.500"/>
 <!-- scrollbar -->
 <path d="M1015.700 103.300h6.400l-3.200-4.300z" fill="#858585" stroke="none"/>
 <path d="M1015.700 473h6.400l-3.200 4.300z" fill="#858585" stroke="none"/>
 <rect x="1016.200" y="219" width="5.400" height="161" rx="2.700" fill="#8c8c8c" stroke="none"/>
 <!-- red arrow -->
 <path d="M778.500 292l42.500-2.600-1.500-3.600 13.200 6.200-13.200 6.200 1.500-3.600z" fill="#ee1c24" stroke="#ee1c24" stroke-width=".6"/>
</svg>
<div class="abs" style="left:833px;top:279.700px;width:170.200px;height:31.200px;border:2.800px solid #e31b23;border-radius:5px;box-shadow:0 0 3.500px 1.200px rgba(227,27,35,.4), inset 0 0 2.500px rgba(227,27,35,.35)"></div>
<div class="abs" style="left:845px;top:286px;width:148px;height:18.500px;border-radius:2px;background:#2d7ce8;box-shadow:0 1px 1.500px rgba(0,0,0,.3)"></div>
<div class="t" id="btn" style="left:852px;top:292.300px;font-size:8.200px;font-weight:bold;color:#fff;letter-spacing:-.4px">REMOVE FROM SELECTED SLIDE(S)</div>
<div class="abs" style="left:1009px;top:491px;width:18px;height:18px;border-radius:9px;background:#fff;box-shadow:0 0 2px rgba(0,0,0,.35)"></div>
<svg width="6" height="8" style="left:1014.500px;top:496.500px"><path d="M4 .800L1 3.800l3 3" fill="none" stroke="#444" stroke-width="1.200"/></svg>
</body></html>
